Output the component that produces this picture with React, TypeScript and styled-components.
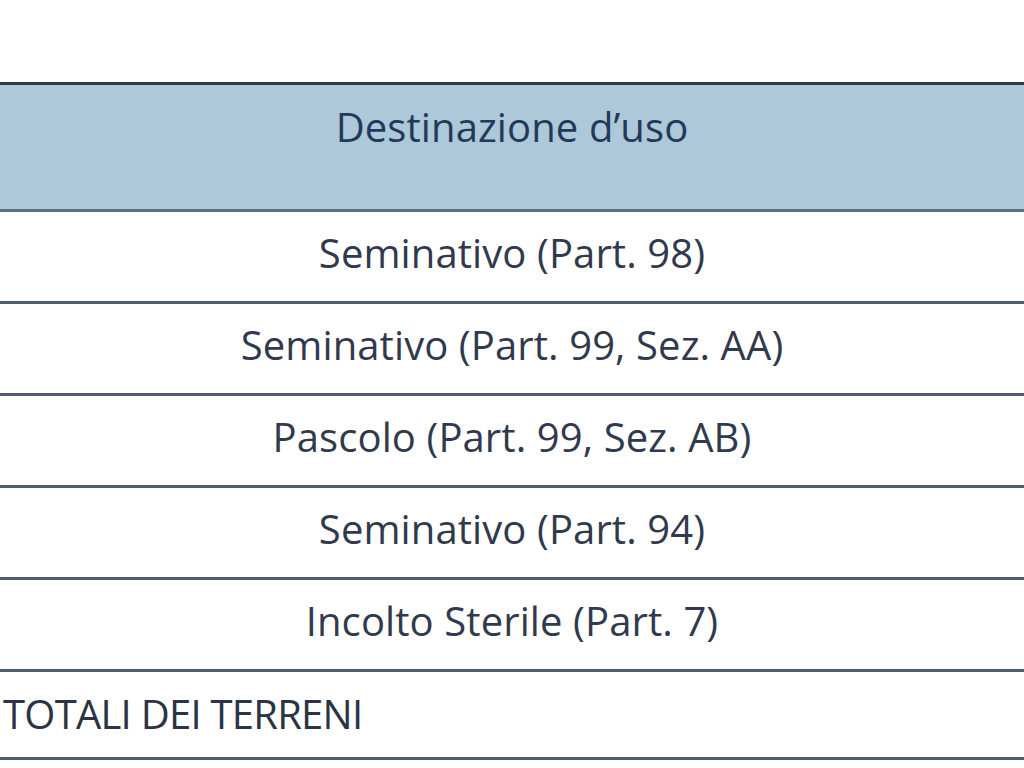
import React from "react";
import styled, { createGlobalStyle } from "styled-components";

const GlobalStyle = createGlobalStyle`
  html, body {
    margin: 0;
    padding: 0;
    background: #ffffff;
  }
  body {
    font-family: "Open Sans", "Noto Sans", sans-serif;
  }
`;

interface Row {
  label: string;
  total?: boolean;
}

const rows: Row[] = [
  { label: "Seminativo (Part. 98)" },
  { label: "Seminativo (Part. 99, Sez. AA)" },
  { label: "Pascolo (Part. 99, Sez. AB)" },
  { label: "Seminativo (Part. 94)" },
  { label: "Incolto Sterile (Part. 7)" },
  { label: "TOTALI DEI TERRENI", total: true },
];

const App: React.FC = () => {
  return (
    <>
      <GlobalStyle />
      <Page>
        <Table>
          <HeadCell>Destinazione d’uso</HeadCell>
          <HeadCell $side />
          {rows.map((row, index) => (
            <React.Fragment key={index}>
              <Cell $total={row.total}>{row.label}</Cell>
              <Cell $side $total={row.total} />
            </React.Fragment>
          ))}
        </Table>
      </Page>
    </>
  );
};

const Page = styled.div`
  padding-top: 82px;
  width: 1024px;
  overflow: hidden;
`;

const Table = styled.div`
  display: grid;
  grid-template-columns: 979px 1fr;
`;

const HeadCell = styled.div<{ $side?: boolean }>`
  box-sizing: border-box;
  height: 130px;
  border-top: 3px solid #2f3c4b;
  border-bottom: 3px solid #5d6f86;
  background: #adc8d9;
  color: #24395a;
  font-size: 40px;
  font-weight: 500;
  letter-spacing: 0.1px;
  line-height: 1;
  display: flex;
  align-items: center;
  justify-content: center;
  padding-left: ${(p) => (p.$side ? "0" : "45px")};
  padding-bottom: 40px;
  white-space: nowrap;
`;

const Cell = styled.div<{ $side?: boolean; $total?: boolean }>`
  box-sizing: border-box;
  height: ${(p) => (p.$total ? "88px" : "92px")};
  border-bottom: 3px solid #4f5d6e;
  display: flex;
  align-items: center;
  justify-content: ${(p) => (p.$total ? "flex-start" : "center")};
  padding-left: ${(p) => (p.$side ? "0" : p.$total ? "3px" : "45px")};
  padding-bottom: ${(p) => (p.$total ? "2px" : "8px")};
  color: ${(p) => (p.$total ? "#2b3344" : "#313a4c")};
  font-size: 40px;
  font-weight: 500;
  letter-spacing: ${(p) => (p.$total ? "-0.75px" : "0.1px")};
  line-height: 1;
  white-space: nowrap;
`;

export default App;
